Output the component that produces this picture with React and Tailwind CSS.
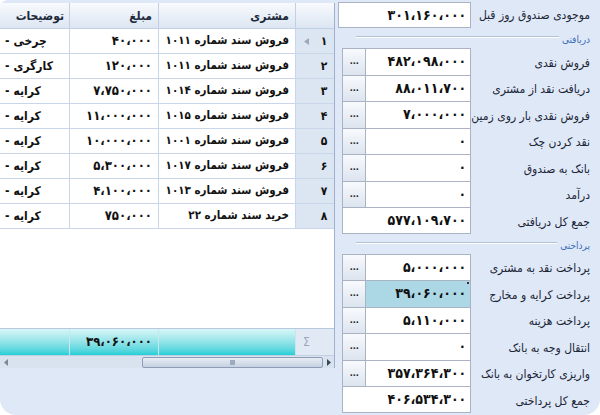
import React from 'react';

const ROWS = [
  { n: '۱', customer: 'فروش سند شماره ۱۰۱۱', amount: '۴۰،۰۰۰', note: 'چرخی' },
  { n: '۲', customer: 'فروش سند شماره ۱۰۱۱', amount: '۱۲۰،۰۰۰', note: 'کارگری' },
  { n: '۳', customer: 'فروش سند شماره ۱۰۱۴', amount: '۷،۷۵۰،۰۰۰', note: 'کرایه' },
  { n: '۴', customer: 'فروش سند شماره ۱۰۱۵', amount: '۱۱،۰۰۰،۰۰۰', note: 'کرایه' },
  { n: '۵', customer: 'فروش سند شماره ۱۰۰۱', amount: '۱۰،۰۰۰،۰۰۰', note: 'کرایه' },
  { n: '۶', customer: 'فروش سند شماره ۱۰۱۷', amount: '۵،۳۰۰،۰۰۰', note: 'کرایه' },
  { n: '۷', customer: 'فروش سند شماره ۱۰۱۳', amount: '۴،۱۰۰،۰۰۰', note: 'کرایه' },
  { n: '۸', customer: 'خرید سند شماره ۲۲', amount: '۷۵۰،۰۰۰', note: 'کرایه' },
];

const RECEIPTS = [
  { label: 'فروش نقدی', value: '۴۸۲،۰۹۸،۰۰۰' },
  { label: 'دریافت نقد از مشتری', value: '۸۸،۰۱۱،۷۰۰' },
  { label: 'فروش نقدی بار روی زمین', value: '۷،۰۰۰،۰۰۰' },
  { label: 'نقد کردن چک', value: '۰' },
  { label: 'بانک به صندوق', value: '۰' },
  { label: 'درآمد', value: '۰' },
  { label: 'جمع کل دریافتی', value: '۵۷۷،۱۰۹،۷۰۰', total: true },
];

const PAYMENTS = [
  { label: 'پرداخت نقد به مشتری', value: '۵،۰۰۰،۰۰۰' },
  { label: 'پرداخت کرایه و مخارج', value: '۳۹،۰۶۰،۰۰۰', hl: true },
  { label: 'پرداخت هزینه', value: '۵،۱۱۰،۰۰۰' },
  { label: 'انتقال وجه به بانک', value: '۰' },
  { label: 'واریزی کارتخوان به بانک', value: '۳۵۷،۳۶۴،۳۰۰' },
  { label: 'جمع کل پرداختی', value: '۴۰۶،۵۳۴،۳۰۰', total: true },
];

function FieldRow({ label, value, total, hl, last }) {
  const edge = `border-t border-[#a9b3c3] ${last ? 'border-b' : ''}`;
  return (
    <div className="flex h-[26.5px] pl-[7px] whitespace-nowrap">
      {total ? (
        <div className={`w-[129px] ${edge} border-x bg-white flex items-center justify-end pr-[4px] text-[14px] font-bold text-[#111]`}>
          {value}
        </div>
      ) : (
        <>
          <div className={`w-[23px] ${edge} border-l bg-gradient-to-b from-[#f8fafd] to-[#dce4ef] flex items-center justify-center text-[9px] font-bold text-[#222]`}>
            ...
          </div>
          <div className={`w-[106px] ${edge} border-x relative flex items-center justify-end pr-[4px] text-[14px] font-bold text-[#111] ${hl ? 'bg-[#acd8e6]' : 'bg-white'}`}>
            {value}
            {hl && <span className="absolute right-[1px] top-[1px] w-[2px] h-[2px] bg-[#333]" />}
          </div>
        </>
      )}
      <div dir="rtl" className="flex-1 flex items-center pr-[10px] pt-[3px] text-[12px] text-[#1b2636]">
        {label}
      </div>
    </div>
  );
}

function Separator({ text }) {
  return (
    <div className="h-[20px] flex items-center pr-[10px]">
      <div className="ml-[21px] flex-1 h-[2px] border-t border-[#b3c1d6] border-b-white border-b -mt-[2px]" />
      <span dir="rtl" className="ml-[3px] mt-[3px] text-[10px] text-[#3e6cba] whitespace-nowrap">{text}</span>
    </div>
  );
}

export default function App() {
  const cell = 'border-r border-b border-[#c9d6ea] flex items-center justify-end pr-[6px] text-[13px]';
  return (
    <div className="w-[600px] h-[415px] bg-white overflow-hidden font-['DejaVu_Sans_Condensed','DejaVu_Sans',sans-serif]">
      <div className="w-full h-full bg-[#dfe8f7] rounded-tl-[8px] rounded-bl-[16px] rounded-br-[16px] flex">
        {/* Grid */}
        <div className="w-[336px] pt-[3px] whitespace-nowrap">
          <div className="h-[365px] flex flex-col bg-white border-r border-[#9eb0ca]">
            <div className="grid grid-cols-[70px_89px_137px_1fr] h-[26px] bg-gradient-to-b from-[#f8fafd] to-[#dbe5f2] text-[12px] font-bold text-[#1d2b3d]">
              <div dir="rtl" className="border-r border-b border-[#c2d0e5] flex items-center pr-[5px]">توضیحات</div>
              <div dir="rtl" className="border-r border-b border-[#c2d0e5] flex items-center pr-[6px]">مبلغ</div>
              <div dir="rtl" className="border-r border-b border-[#c2d0e5] flex items-center pr-[6px]">مشتری</div>
              <div className="border-b border-[#c2d0e5]" />
            </div>
            {ROWS.map((r, i) => (
              <div key={i} className="grid grid-cols-[70px_89px_137px_1fr] h-[25px] text-[11.5px] font-bold text-[#111]">
                <div className="border-r border-b border-[#c9d6ea] flex items-center gap-[4px] pl-[5px] text-[12px]">
                  <span>-</span>
                  <span>{r.note}</span>
                </div>
                <div className={cell}>{r.amount}</div>
                <div dir="rtl" className="border-r border-b border-[#c9d6ea] flex items-center pr-[6px]">{r.customer}</div>
                <div className="border-b border-[#c9d6ea] bg-[#dce5f2] flex items-center justify-between pl-[8px] pr-[7px] text-[12px]">
                  {i === 0 ? (
                    <svg width="5" height="7" viewBox="0 0 5 7"><polygon points="5,0 5,7 0,3.5" fill="#9ba9bd" /></svg>
                  ) : <span />}
                  <span>{r.n}</span>
                </div>
              </div>
            ))}
            <div className="flex-1" />
            <div className="grid grid-cols-[70px_89px_137px_1fr] h-[27px] border-t border-[#b9c8de] text-[13px] font-bold text-[#111]">
              <div className="border-r border-[#c9e6ee] bg-gradient-to-b from-[#d7f6f7] to-[#1bd0d8]" />
              <div className="border-r border-[#c9e6ee] bg-gradient-to-b from-[#d7f6f7] to-[#1bd0d8] flex items-center justify-end pr-[6px]">۳۹،۰۶۰،۰۰۰</div>
              <div className="border-r border-[#c9e6ee] bg-gradient-to-b from-[#d7f6f7] to-[#1bd0d8]" />
              <div className="bg-[#e1e9f4] flex items-center pl-[7px] text-[12px] font-normal text-[#9aa7ba]">Σ</div>
            </div>
            <div className="h-[13px] flex items-center bg-[#d9e2ef] border-t border-[#c3cfe0]">
              <div className="w-[12px] flex items-center justify-center">
                <svg width="4" height="7" viewBox="0 0 4 7"><polygon points="4,0 4,7 0,3.5" fill="#7d8797" /></svg>
              </div>
              <div className="ml-[130px] w-[181px] h-[11px] rounded-[2px] border border-[#8d9db5] bg-gradient-to-b from-[#e8edf5] to-[#c6d1e1] flex items-center justify-center">
                <div className="w-[5px] h-[5px] bg-[#9eabbd]" />
              </div>
              <div className="flex-1 flex items-center justify-center">
                <svg width="4" height="7" viewBox="0 0 4 7"><polygon points="0,0 0,7 4,3.5" fill="#3d4656" /></svg>
              </div>
            </div>
          </div>
        </div>

        {/* Right panel */}
        <div className="flex-1 flex flex-col pt-[2px]">
          <div className="flex h-[26px] pl-[3px] whitespace-nowrap">
            <div className="w-[133px] border border-[#a9b3c3] bg-white flex items-center justify-end pr-[4px] text-[14px] font-bold text-[#111]">
              ۳۰۱،۱۶۰،۰۰۰
            </div>
            <div dir="rtl" className="flex-1 flex items-center pr-[10px] text-[12px] text-[#1b2636]">موجودی صندوق روز قبل</div>
          </div>
          <Separator text="دریافتی" />
          <div>
            {RECEIPTS.map((r, i) => (
              <FieldRow key={i} {...r} last={i === RECEIPTS.length - 1} />
            ))}
          </div>
          <Separator text="پرداختی" />
          <div>
            {PAYMENTS.map((r, i) => (
              <FieldRow key={i} {...r} last={i === PAYMENTS.length - 1} />
            ))}
          </div>
        </div>
      </div>
    </div>
  );
}
